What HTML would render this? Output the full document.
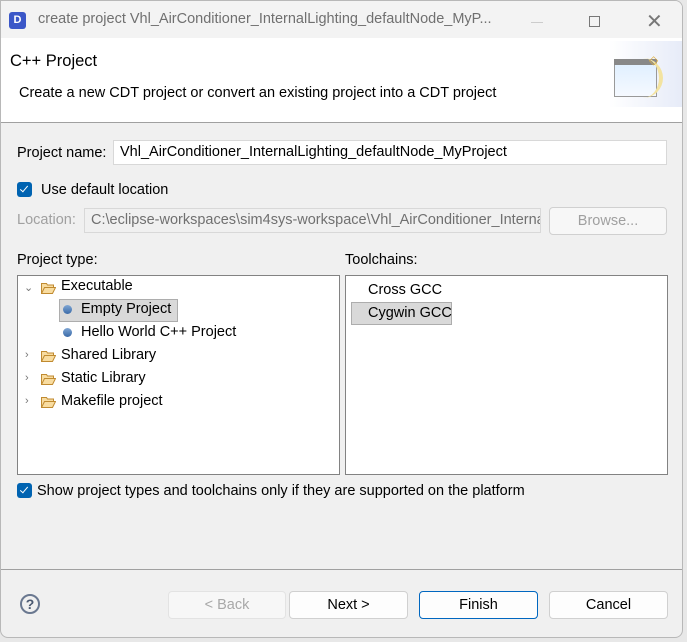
<!DOCTYPE html>
<html><head><style>
*{box-sizing:border-box;margin:0;padding:0}
body{width:687px;height:642px;background:#e8e8e8;font-family:"Liberation Sans",sans-serif;font-size:14.5px;color:#000;position:relative;overflow:hidden}
.win{position:absolute;left:0;top:0;width:683px;height:638px;background:#f0f0f0;border:1px solid #b8b8b8;border-radius:0 8px 8px 8px;overflow:hidden}
.title{position:absolute;left:0;top:0;width:100%;height:37px;background:#f3f3f3;color:#707070;font-size:14.5px}
.abs{position:absolute}
.header{position:absolute;left:0;top:37px;width:100%;height:85px;background:#fff;border-bottom:1px solid #a0a0a0}
.field{position:absolute;background:#fff;border:1px solid #d8d8d8;height:25px;line-height:23px;padding-left:6px;white-space:nowrap;overflow:hidden}
.btn{position:absolute;top:590px;height:28px;width:119px;background:#fdfdfd;border:1px solid #d0d0d0;border-radius:4px;text-align:center;line-height:26px}
.box{position:absolute;background:#fff;border:1px solid #828282}
.cb{position:absolute;width:15px;height:15px;background:#0063b1;border-radius:3px}
.cb:after{content:"";position:absolute;left:5px;top:2px;width:3px;height:7px;border:solid #fff;border-width:0 1.5px 1.5px 0;transform:rotate(40deg)}
.folder{position:absolute;width:15px;height:11px}
.dot{position:absolute;width:9px;height:9px;border-radius:50%;background:linear-gradient(#7fa6d4,#3a6aa8)}
.arr{position:absolute;color:#777;font-size:11px}
</style></head><body>
<div class="win">
 <div class="title">
  <div class="abs" style="left:8px;top:11px;width:17px;height:17px;background:#3b57c8;border-radius:3px;color:#fff;font-size:11px;font-weight:bold;text-align:center;line-height:17px">D</div>
  <div class="abs" style="left:37px;top:10px">create project Vhl_AirConditioner_InternalLighting_defaultNode_MyP...</div>
  <div class="abs" style="left:530px;top:21px;width:12px;height:1px;background:#ccc"></div>
  <div class="abs" style="left:588px;top:15px;width:11px;height:11px;border:1px solid #777"></div>
  <div class="abs" style="left:645px;top:8px;font-size:20px;color:#777">✕</div>
 </div>
 <div class="header">
  <div class="abs" style="left:9px;top:14px;font-size:16.5px">C++ Project</div>
  <div class="abs" style="left:18px;top:47px">Create a new CDT project or convert an existing project into a CDT project</div>
  <div class="abs" style="left:608px;top:3px;width:75px;height:66px;background:linear-gradient(90deg,#fff,#e6ebf8)"></div>
  <div class="abs" style="left:613px;top:21px;width:43px;height:38px;border:1px solid #999;background:linear-gradient(#ddeeff,#f5f9ff)"></div>
  <div class="abs" style="left:613px;top:21px;width:43px;height:6px;background:#888"></div>
  <div class="abs" style="left:640px;top:20px;width:22px;height:40px;border-right:4px solid #f3e3a0;border-radius:0 30px 30px 0"></div>
  <div class="abs" style="left:648px;top:15px;color:#e0b040;font-size:12px">◇</div>
 </div>
 <div class="abs" style="left:16px;top:144px">Project name:</div>
 <div class="field" style="left:112px;top:139px;width:554px">Vhl_AirConditioner_InternalLighting_defaultNode_MyProject</div>
 <div class="cb" style="left:16px;top:181px"></div>
 <div class="abs" style="left:40px;top:181px">Use default location</div>
 <div class="abs" style="left:16px;top:211px;color:#a0a0a0">Location:</div>
 <div class="field" style="left:83px;top:207px;width:457px;background:#f0f0f0;color:#707070">C:\eclipse-workspaces\sim4sys-workspace\Vhl_AirConditioner_InternalLighting</div>
 <div class="btn" style="left:548px;top:206px;width:118px;color:#a0a0a0;background:#f7f7f7">Browse...</div>
 <div class="abs" style="left:16px;top:251px">Project type:</div>
 <div class="abs" style="left:344px;top:251px">Toolchains:</div>
 <div class="box" style="left:16px;top:274px;width:323px;height:200px">
  <div class="arr" style="left:6px;top:5px">⌄</div>
  <svg class="folder" style="left:23px;top:7px" viewBox="0 0 15 11"><path d="M.5 10.5V.5h5l1 1.5h6v2M.5 10.5l3-6h11l-3 6z" fill="#f8dca0" stroke="#c08a30"/></svg>
  <div class="abs" style="left:43px;top:2px">Executable</div>
  <div class="abs" style="left:41px;top:23px;width:119px;height:23px;background:#d9d9d9;border:1px solid #adadad"></div>
  <div class="dot" style="left:45px;top:29px"></div>
  <div class="abs" style="left:63px;top:25px">Empty Project</div>
  <div class="dot" style="left:45px;top:52px"></div>
  <div class="abs" style="left:63px;top:48px">Hello World C++ Project</div>
  <div class="arr" style="left:7px;top:73px">›</div>
  <svg class="folder" style="left:23px;top:75px" viewBox="0 0 15 11"><path d="M.5 10.5V.5h5l1 1.5h6v2M.5 10.5l3-6h11l-3 6z" fill="#f8dca0" stroke="#c08a30"/></svg>
  <div class="abs" style="left:43px;top:71px">Shared Library</div>
  <div class="arr" style="left:7px;top:96px">›</div>
  <svg class="folder" style="left:23px;top:98px" viewBox="0 0 15 11"><path d="M.5 10.5V.5h5l1 1.5h6v2M.5 10.5l3-6h11l-3 6z" fill="#f8dca0" stroke="#c08a30"/></svg>
  <div class="abs" style="left:43px;top:94px">Static Library</div>
  <div class="arr" style="left:7px;top:119px">›</div>
  <svg class="folder" style="left:23px;top:121px" viewBox="0 0 15 11"><path d="M.5 10.5V.5h5l1 1.5h6v2M.5 10.5l3-6h11l-3 6z" fill="#f8dca0" stroke="#c08a30"/></svg>
  <div class="abs" style="left:43px;top:117px">Makefile project</div>
 </div>
 <div class="box" style="left:344px;top:274px;width:323px;height:200px">
  <div class="abs" style="left:22px;top:6px">Cross GCC</div>
  <div class="abs" style="left:5px;top:26px;width:101px;height:23px;background:#d9d9d9;border:1px solid #adadad"></div>
  <div class="abs" style="left:22px;top:29px">Cygwin GCC</div>
 </div>
 <div class="cb" style="left:16px;top:482px"></div>
 <div class="abs" style="left:36px;top:482px">Show project types and toolchains only if they are supported on the platform</div>
 <div class="abs" style="left:0;top:568px;width:100%;height:1px;background:#a0a0a0"></div>
 <div class="abs" style="left:19px;top:593px;width:20px;height:20px;border:2px solid #6a7890;border-radius:50%;color:#4a5870;font-weight:bold;font-size:14px;text-align:center;line-height:16px">?</div>
 <div class="btn" style="left:167px;width:118px;background:#f7f7f7;border-color:#e3e3e3;color:#a8a8a8">&lt; Back</div>
 <div class="btn" style="left:288px">Next &gt;</div>
 <div class="btn" style="left:418px;border-color:#0067c0">Finish</div>
 <div class="btn" style="left:548px">Cancel</div>
</div>
</body></html>
